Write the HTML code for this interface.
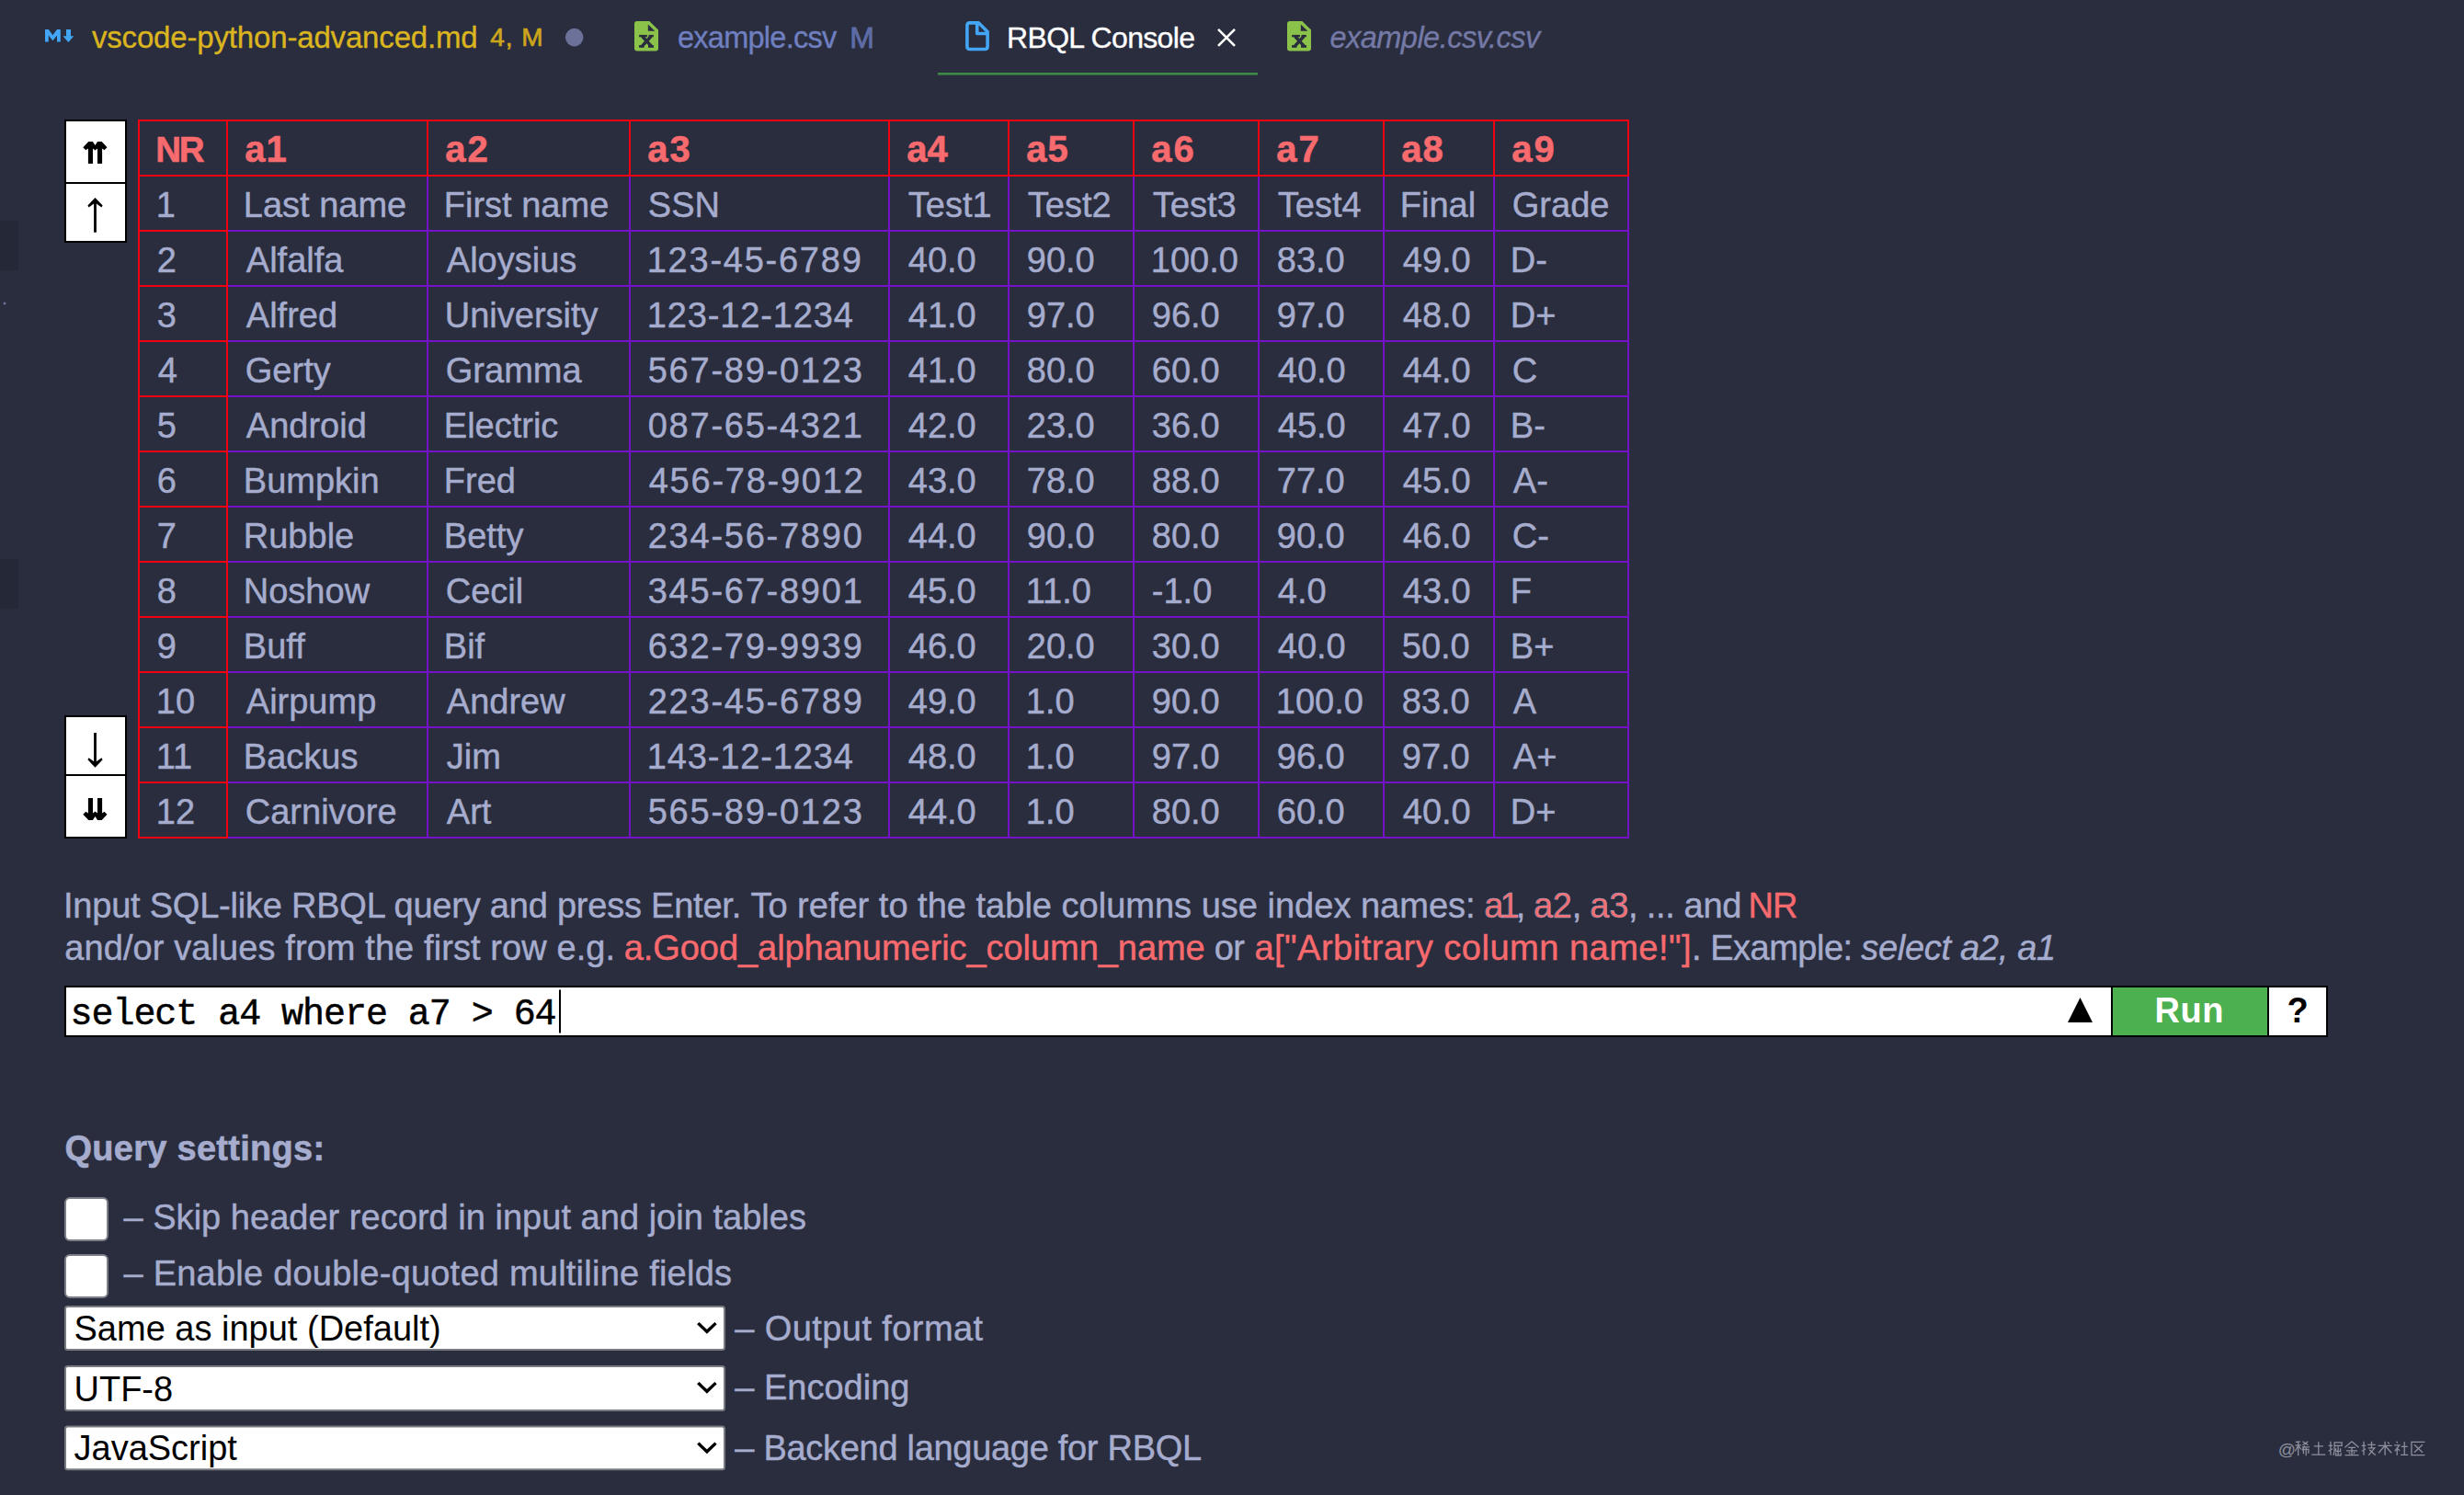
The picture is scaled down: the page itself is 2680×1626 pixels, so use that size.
<!DOCTYPE html>
<html><head><meta charset="utf-8"><style>
html,body{margin:0;padding:0;background:#292d3e;width:2680px;height:1626px;overflow:hidden}
svg{display:block}
text{white-space:pre}
</style></head><body>
<svg width="2680" height="1626" viewBox="0 0 2680 1626">
<rect width="2680" height="1626" fill="#292d3e"/>
<rect x="0" y="240" width="20" height="54" fill="#242837" />
<rect x="0" y="608" width="20" height="54" fill="#242837" />
<circle cx="5" cy="330" r="1.5" fill="#6b7099"/>
<path d="M49 45.5 V32 h3.8 l4.6 6.2 l4.6 -6.2 h3.8 V45.5 h-3.8 V38.5 l-4.6 5.8 l-4.6 -5.8 V45.5 z" fill="#42a5f5"/>
<path d="M72 32 h5 v7.3 h3.3 l-5.9 6.8 l-5.9 -6.8 h3.5 z" fill="#42a5f5"/>
<text x="99.9" y="52.2" font-family="'Liberation Sans', sans-serif" font-size="33" fill="#dbb51f" textLength="419.8" lengthAdjust="spacing" stroke="#dbb51f" stroke-width="0.35" xml:space="preserve">vscode-python-advanced.md</text>
<text x="533.2" y="50" font-family="'Liberation Sans', sans-serif" font-size="28" fill="#cda51c" textLength="57.5" lengthAdjust="spacing" stroke="#cda51c" stroke-width="0.7" xml:space="preserve">4, M</text>
<circle cx="624.7" cy="40.6" r="9.8" fill="#6c7199"/>
<g transform="translate(690,23)"><path d="M3 0 H16.3 L26 9.5 V29.4 Q26 32.4 23 32.4 H3 Q0 32.4 0 29.4 V3 Q0 0 3 0 z" fill="#8bc34a"/><path d="M14.8 3.4 V10.8 H22.4 z" fill="#292d3e"/><rect x="5.1" y="14.9" width="8.8" height="2.4" fill="#292d3e"/><rect x="15.6" y="14.9" width="5.3" height="2.4" fill="#292d3e"/><rect x="5" y="26.1" width="5.5" height="2.7" fill="#292d3e"/><rect x="15" y="26.1" width="6" height="2.7" fill="#292d3e"/><path d="M8.6 16.5 L18.6 27.4 M18.1 16.5 L8.2 27.4" stroke="#292d3e" stroke-width="3.4"/></g>
<text x="737.0" y="52" font-family="'Liberation Sans', sans-serif" font-size="32.5" fill="#6f7fc0" textLength="173.2" lengthAdjust="spacing" stroke="#6f7fc0" stroke-width="0.35" xml:space="preserve">example.csv</text>
<text x="924.3" y="52" font-family="'Liberation Sans', sans-serif" font-size="32" fill="#5e6ca6" textLength="25.6" lengthAdjust="spacing" stroke="#5e6ca6" stroke-width="0.8" xml:space="preserve">M</text>
<path d="M1064.5 24.9 H1054.9 Q1051.9 24.9 1051.9 27.9 V50.5 Q1051.9 53.5 1054.9 53.5 H1071.1 Q1074.1 53.5 1074.1 50.5 V34.5 z M1062.7 24.9 V36.5 H1074.1" fill="none" stroke="#42a5f5" stroke-width="3.6" stroke-linejoin="round"/>
<text x="1095.0" y="52.3" font-family="'Liberation Sans', sans-serif" font-size="32" fill="#ffffff" textLength="205.0" lengthAdjust="spacing" stroke="#ffffff" stroke-width="0.35" xml:space="preserve">RBQL Console</text>
<path d="M1325 31.8 L1343 49.8 M1343 31.8 L1325 49.8" stroke="#ffffff" stroke-width="2.6"/>
<rect x="1020" y="79" width="348" height="2.6" fill="#3c8a46" />
<g transform="translate(1400,23)"><path d="M3 0 H16.3 L26 9.5 V29.4 Q26 32.4 23 32.4 H3 Q0 32.4 0 29.4 V3 Q0 0 3 0 z" fill="#8bc34a"/><path d="M14.8 3.4 V10.8 H22.4 z" fill="#292d3e"/><rect x="5.1" y="14.9" width="8.8" height="2.4" fill="#292d3e"/><rect x="15.6" y="14.9" width="5.3" height="2.4" fill="#292d3e"/><rect x="5" y="26.1" width="5.5" height="2.7" fill="#292d3e"/><rect x="15" y="26.1" width="6" height="2.7" fill="#292d3e"/><path d="M8.6 16.5 L18.6 27.4 M18.1 16.5 L8.2 27.4" stroke="#292d3e" stroke-width="3.4"/></g>
<text x="1446.4" y="52" font-family="'Liberation Sans', sans-serif" font-size="32.5" fill="#7479a6" font-style="italic" textLength="228.8" lengthAdjust="spacing" stroke="#7479a6" stroke-width="0.35" xml:space="preserve">example.csv.csv</text>
<rect x="70" y="130" width="68" height="134" fill="#000000" />
<rect x="72" y="132" width="64" height="66" fill="#ffffff" />
<rect x="72" y="200" width="64" height="62" fill="#ffffff" />
<rect x="70" y="778" width="68" height="134" fill="#000000" />
<rect x="72" y="780" width="64" height="62" fill="#ffffff" />
<rect x="72" y="844" width="64" height="66" fill="#ffffff" />
<path d="M95.90 178.00 L95.90 161.50 L93.30 163.30 L90.30 160.30 L96.30 154.00 L100.90 154.00 L103.50 157.90 L106.10 154.00 L110.70 154.00 L116.50 160.30 L113.50 163.30 L111.10 161.50 L111.10 178.00 L106.00 178.00 L106.00 161.50 L103.50 163.50 L101.00 161.50 L101.00 178.00 z" fill="#000"/>
<path d="M95.90 868.00 L95.90 884.50 L93.30 882.70 L90.30 885.70 L96.30 892.00 L100.90 892.00 L103.50 888.10 L106.10 892.00 L110.70 892.00 L116.50 885.70 L113.50 882.70 L111.10 884.50 L111.10 868.00 L106.00 868.00 L106.00 884.50 L103.50 882.50 L101.00 884.50 L101.00 868.00 z" fill="#000"/>
<path d="M103.50 215.00 L111.60 223.60 L110.40 225.60 L104.90 221.60 L104.90 252.80 L102.10 252.80 L102.10 221.60 L96.60 225.60 L95.40 223.60 z" fill="#000"/>
<path d="M103.50 834.80 L111.60 826.20 L110.40 824.20 L104.90 828.20 L104.90 797.00 L102.10 797.00 L102.10 828.20 L96.60 824.20 L95.40 826.20 z" fill="#000"/>
<rect x="248" y="250" width="1524" height="2" fill="#7412c8" />
<rect x="248" y="310" width="1524" height="2" fill="#7412c8" />
<rect x="248" y="370" width="1524" height="2" fill="#7412c8" />
<rect x="248" y="430" width="1524" height="2" fill="#7412c8" />
<rect x="248" y="490" width="1524" height="2" fill="#7412c8" />
<rect x="248" y="550" width="1524" height="2" fill="#7412c8" />
<rect x="248" y="610" width="1524" height="2" fill="#7412c8" />
<rect x="248" y="670" width="1524" height="2" fill="#7412c8" />
<rect x="248" y="730" width="1524" height="2" fill="#7412c8" />
<rect x="248" y="790" width="1524" height="2" fill="#7412c8" />
<rect x="248" y="850" width="1524" height="2" fill="#7412c8" />
<rect x="248" y="910" width="1524" height="2" fill="#7412c8" />
<rect x="464" y="192" width="2" height="720" fill="#7412c8" />
<rect x="684" y="192" width="2" height="720" fill="#7412c8" />
<rect x="966" y="192" width="2" height="720" fill="#7412c8" />
<rect x="1096" y="192" width="2" height="720" fill="#7412c8" />
<rect x="1232" y="192" width="2" height="720" fill="#7412c8" />
<rect x="1368" y="192" width="2" height="720" fill="#7412c8" />
<rect x="1504" y="192" width="2" height="720" fill="#7412c8" />
<rect x="1624" y="192" width="2" height="720" fill="#7412c8" />
<rect x="1770" y="192" width="2" height="720" fill="#7412c8" />
<rect x="150" y="130" width="1622" height="2" fill="#f20010" />
<rect x="150" y="190" width="1622" height="2" fill="#f20010" />
<rect x="150" y="250" width="98" height="2" fill="#f20010" />
<rect x="150" y="310" width="98" height="2" fill="#f20010" />
<rect x="150" y="370" width="98" height="2" fill="#f20010" />
<rect x="150" y="430" width="98" height="2" fill="#f20010" />
<rect x="150" y="490" width="98" height="2" fill="#f20010" />
<rect x="150" y="550" width="98" height="2" fill="#f20010" />
<rect x="150" y="610" width="98" height="2" fill="#f20010" />
<rect x="150" y="670" width="98" height="2" fill="#f20010" />
<rect x="150" y="730" width="98" height="2" fill="#f20010" />
<rect x="150" y="790" width="98" height="2" fill="#f20010" />
<rect x="150" y="850" width="98" height="2" fill="#f20010" />
<rect x="150" y="910" width="98" height="2" fill="#f20010" />
<rect x="150" y="130" width="2" height="782" fill="#f20010" />
<rect x="246" y="130" width="2" height="782" fill="#f20010" />
<rect x="464" y="130" width="2" height="62" fill="#f20010" />
<rect x="684" y="130" width="2" height="62" fill="#f20010" />
<rect x="966" y="130" width="2" height="62" fill="#f20010" />
<rect x="1096" y="130" width="2" height="62" fill="#f20010" />
<rect x="1232" y="130" width="2" height="62" fill="#f20010" />
<rect x="1368" y="130" width="2" height="62" fill="#f20010" />
<rect x="1504" y="130" width="2" height="62" fill="#f20010" />
<rect x="1624" y="130" width="2" height="62" fill="#f20010" />
<rect x="1770" y="130" width="2" height="62" fill="#f20010" />
<text x="169.3" y="176" font-family="'Liberation Sans', sans-serif" font-size="38.5" fill="#f76a6e" font-weight="bold" textLength="53.2" lengthAdjust="spacing" stroke="#f76a6e" stroke-width="0.6" xml:space="preserve">NR</text>
<text x="266.3" y="176" font-family="'Liberation Sans', sans-serif" font-size="40" fill="#f76a6e" font-weight="bold" textLength="45.5" lengthAdjust="spacing" stroke="#f76a6e" stroke-width="0.6" xml:space="preserve">a1</text>
<text x="484.3" y="176" font-family="'Liberation Sans', sans-serif" font-size="40" fill="#f76a6e" font-weight="bold" textLength="46.5" lengthAdjust="spacing" stroke="#f76a6e" stroke-width="0.6" xml:space="preserve">a2</text>
<text x="704.3" y="176" font-family="'Liberation Sans', sans-serif" font-size="40" fill="#f76a6e" font-weight="bold" textLength="46.5" lengthAdjust="spacing" stroke="#f76a6e" stroke-width="0.6" xml:space="preserve">a3</text>
<text x="986.3" y="176" font-family="'Liberation Sans', sans-serif" font-size="40" fill="#f76a6e" font-weight="bold" textLength="44.5" lengthAdjust="spacing" stroke="#f76a6e" stroke-width="0.6" xml:space="preserve">a4</text>
<text x="1116.3" y="176" font-family="'Liberation Sans', sans-serif" font-size="40" fill="#f76a6e" font-weight="bold" textLength="45.5" lengthAdjust="spacing" stroke="#f76a6e" stroke-width="0.6" xml:space="preserve">a5</text>
<text x="1252.3" y="176" font-family="'Liberation Sans', sans-serif" font-size="40" fill="#f76a6e" font-weight="bold" textLength="46.5" lengthAdjust="spacing" stroke="#f76a6e" stroke-width="0.6" xml:space="preserve">a6</text>
<text x="1388.3" y="176" font-family="'Liberation Sans', sans-serif" font-size="40" fill="#f76a6e" font-weight="bold" textLength="46.5" lengthAdjust="spacing" stroke="#f76a6e" stroke-width="0.6" xml:space="preserve">a7</text>
<text x="1524.3" y="176" font-family="'Liberation Sans', sans-serif" font-size="40" fill="#f76a6e" font-weight="bold" textLength="45.5" lengthAdjust="spacing" stroke="#f76a6e" stroke-width="0.6" xml:space="preserve">a8</text>
<text x="1644.3" y="176" font-family="'Liberation Sans', sans-serif" font-size="40" fill="#f76a6e" font-weight="bold" textLength="46.5" lengthAdjust="spacing" stroke="#f76a6e" stroke-width="0.6" xml:space="preserve">a9</text>
<text x="169.8" y="236" font-family="'Liberation Sans', sans-serif" font-size="38" fill="#a6accd" stroke="#a6accd" stroke-width="0.45" xml:space="preserve">1</text>
<text x="264.8" y="236" font-family="'Liberation Sans', sans-serif" font-size="38" fill="#a6accd" stroke="#a6accd" stroke-width="0.45" xml:space="preserve">Last name</text>
<text x="482.8" y="236" font-family="'Liberation Sans', sans-serif" font-size="38" fill="#a6accd" stroke="#a6accd" stroke-width="0.45" xml:space="preserve">First name</text>
<text x="704.8" y="236" font-family="'Liberation Sans', sans-serif" font-size="38" fill="#a6accd" stroke="#a6accd" stroke-width="0.45" xml:space="preserve">SSN</text>
<text x="987.8" y="236" font-family="'Liberation Sans', sans-serif" font-size="38" fill="#a6accd" stroke="#a6accd" stroke-width="0.45" xml:space="preserve">Test1</text>
<text x="1117.8" y="236" font-family="'Liberation Sans', sans-serif" font-size="38" fill="#a6accd" stroke="#a6accd" stroke-width="0.45" xml:space="preserve">Test2</text>
<text x="1253.8" y="236" font-family="'Liberation Sans', sans-serif" font-size="38" fill="#a6accd" stroke="#a6accd" stroke-width="0.45" xml:space="preserve">Test3</text>
<text x="1389.8" y="236" font-family="'Liberation Sans', sans-serif" font-size="38" fill="#a6accd" stroke="#a6accd" stroke-width="0.45" xml:space="preserve">Test4</text>
<text x="1522.8" y="236" font-family="'Liberation Sans', sans-serif" font-size="38" fill="#a6accd" stroke="#a6accd" stroke-width="0.45" xml:space="preserve">Final</text>
<text x="1644.8" y="236" font-family="'Liberation Sans', sans-serif" font-size="38" fill="#a6accd" stroke="#a6accd" stroke-width="0.45" xml:space="preserve">Grade</text>
<text x="170.8" y="296" font-family="'Liberation Sans', sans-serif" font-size="38" fill="#a6accd" stroke="#a6accd" stroke-width="0.45" xml:space="preserve">2</text>
<text x="267.8" y="296" font-family="'Liberation Sans', sans-serif" font-size="38" fill="#a6accd" stroke="#a6accd" stroke-width="0.45" xml:space="preserve">Alfalfa</text>
<text x="485.8" y="296" font-family="'Liberation Sans', sans-serif" font-size="38" fill="#a6accd" stroke="#a6accd" stroke-width="0.45" xml:space="preserve">Aloysius</text>
<text x="703.7" y="296" font-family="'Liberation Sans', sans-serif" font-size="38" fill="#a6accd" textLength="233.1" lengthAdjust="spacing" stroke="#a6accd" stroke-width="0.45" xml:space="preserve">123-45-6789</text>
<text x="987.8" y="296" font-family="'Liberation Sans', sans-serif" font-size="38" fill="#a6accd" stroke="#a6accd" stroke-width="0.45" xml:space="preserve">40.0</text>
<text x="1116.8" y="296" font-family="'Liberation Sans', sans-serif" font-size="38" fill="#a6accd" stroke="#a6accd" stroke-width="0.45" xml:space="preserve">90.0</text>
<text x="1251.8" y="296" font-family="'Liberation Sans', sans-serif" font-size="38" fill="#a6accd" stroke="#a6accd" stroke-width="0.45" xml:space="preserve">100.0</text>
<text x="1388.8" y="296" font-family="'Liberation Sans', sans-serif" font-size="38" fill="#a6accd" stroke="#a6accd" stroke-width="0.45" xml:space="preserve">83.0</text>
<text x="1525.8" y="296" font-family="'Liberation Sans', sans-serif" font-size="38" fill="#a6accd" stroke="#a6accd" stroke-width="0.45" xml:space="preserve">49.0</text>
<text x="1642.8" y="296" font-family="'Liberation Sans', sans-serif" font-size="38" fill="#a6accd" stroke="#a6accd" stroke-width="0.45" xml:space="preserve">D-</text>
<text x="170.8" y="356" font-family="'Liberation Sans', sans-serif" font-size="38" fill="#a6accd" stroke="#a6accd" stroke-width="0.45" xml:space="preserve">3</text>
<text x="267.8" y="356" font-family="'Liberation Sans', sans-serif" font-size="38" fill="#a6accd" stroke="#a6accd" stroke-width="0.45" xml:space="preserve">Alfred</text>
<text x="483.8" y="356" font-family="'Liberation Sans', sans-serif" font-size="38" fill="#a6accd" stroke="#a6accd" stroke-width="0.45" xml:space="preserve">University</text>
<text x="703.7" y="356" font-family="'Liberation Sans', sans-serif" font-size="38" fill="#a6accd" textLength="224.3" lengthAdjust="spacing" stroke="#a6accd" stroke-width="0.45" xml:space="preserve">123-12-1234</text>
<text x="987.8" y="356" font-family="'Liberation Sans', sans-serif" font-size="38" fill="#a6accd" stroke="#a6accd" stroke-width="0.45" xml:space="preserve">41.0</text>
<text x="1116.8" y="356" font-family="'Liberation Sans', sans-serif" font-size="38" fill="#a6accd" stroke="#a6accd" stroke-width="0.45" xml:space="preserve">97.0</text>
<text x="1252.8" y="356" font-family="'Liberation Sans', sans-serif" font-size="38" fill="#a6accd" stroke="#a6accd" stroke-width="0.45" xml:space="preserve">96.0</text>
<text x="1388.8" y="356" font-family="'Liberation Sans', sans-serif" font-size="38" fill="#a6accd" stroke="#a6accd" stroke-width="0.45" xml:space="preserve">97.0</text>
<text x="1525.8" y="356" font-family="'Liberation Sans', sans-serif" font-size="38" fill="#a6accd" stroke="#a6accd" stroke-width="0.45" xml:space="preserve">48.0</text>
<text x="1642.8" y="356" font-family="'Liberation Sans', sans-serif" font-size="38" fill="#a6accd" stroke="#a6accd" stroke-width="0.45" xml:space="preserve">D+</text>
<text x="171.8" y="416" font-family="'Liberation Sans', sans-serif" font-size="38" fill="#a6accd" stroke="#a6accd" stroke-width="0.45" xml:space="preserve">4</text>
<text x="266.8" y="416" font-family="'Liberation Sans', sans-serif" font-size="38" fill="#a6accd" stroke="#a6accd" stroke-width="0.45" xml:space="preserve">Gerty</text>
<text x="484.8" y="416" font-family="'Liberation Sans', sans-serif" font-size="38" fill="#a6accd" stroke="#a6accd" stroke-width="0.45" xml:space="preserve">Gramma</text>
<text x="704.7" y="416" font-family="'Liberation Sans', sans-serif" font-size="38" fill="#a6accd" textLength="233.1" lengthAdjust="spacing" stroke="#a6accd" stroke-width="0.45" xml:space="preserve">567-89-0123</text>
<text x="987.8" y="416" font-family="'Liberation Sans', sans-serif" font-size="38" fill="#a6accd" stroke="#a6accd" stroke-width="0.45" xml:space="preserve">41.0</text>
<text x="1116.8" y="416" font-family="'Liberation Sans', sans-serif" font-size="38" fill="#a6accd" stroke="#a6accd" stroke-width="0.45" xml:space="preserve">80.0</text>
<text x="1252.8" y="416" font-family="'Liberation Sans', sans-serif" font-size="38" fill="#a6accd" stroke="#a6accd" stroke-width="0.45" xml:space="preserve">60.0</text>
<text x="1389.8" y="416" font-family="'Liberation Sans', sans-serif" font-size="38" fill="#a6accd" stroke="#a6accd" stroke-width="0.45" xml:space="preserve">40.0</text>
<text x="1525.8" y="416" font-family="'Liberation Sans', sans-serif" font-size="38" fill="#a6accd" stroke="#a6accd" stroke-width="0.45" xml:space="preserve">44.0</text>
<text x="1644.8" y="416" font-family="'Liberation Sans', sans-serif" font-size="38" fill="#a6accd" stroke="#a6accd" stroke-width="0.45" xml:space="preserve">C</text>
<text x="170.8" y="476" font-family="'Liberation Sans', sans-serif" font-size="38" fill="#a6accd" stroke="#a6accd" stroke-width="0.45" xml:space="preserve">5</text>
<text x="267.8" y="476" font-family="'Liberation Sans', sans-serif" font-size="38" fill="#a6accd" stroke="#a6accd" stroke-width="0.45" xml:space="preserve">Android</text>
<text x="482.8" y="476" font-family="'Liberation Sans', sans-serif" font-size="38" fill="#a6accd" stroke="#a6accd" stroke-width="0.45" xml:space="preserve">Electric</text>
<text x="704.7" y="476" font-family="'Liberation Sans', sans-serif" font-size="38" fill="#a6accd" textLength="233.1" lengthAdjust="spacing" stroke="#a6accd" stroke-width="0.45" xml:space="preserve">087-65-4321</text>
<text x="987.8" y="476" font-family="'Liberation Sans', sans-serif" font-size="38" fill="#a6accd" stroke="#a6accd" stroke-width="0.45" xml:space="preserve">42.0</text>
<text x="1116.8" y="476" font-family="'Liberation Sans', sans-serif" font-size="38" fill="#a6accd" stroke="#a6accd" stroke-width="0.45" xml:space="preserve">23.0</text>
<text x="1252.8" y="476" font-family="'Liberation Sans', sans-serif" font-size="38" fill="#a6accd" stroke="#a6accd" stroke-width="0.45" xml:space="preserve">36.0</text>
<text x="1389.8" y="476" font-family="'Liberation Sans', sans-serif" font-size="38" fill="#a6accd" stroke="#a6accd" stroke-width="0.45" xml:space="preserve">45.0</text>
<text x="1525.8" y="476" font-family="'Liberation Sans', sans-serif" font-size="38" fill="#a6accd" stroke="#a6accd" stroke-width="0.45" xml:space="preserve">47.0</text>
<text x="1642.8" y="476" font-family="'Liberation Sans', sans-serif" font-size="38" fill="#a6accd" stroke="#a6accd" stroke-width="0.45" xml:space="preserve">B-</text>
<text x="170.8" y="536" font-family="'Liberation Sans', sans-serif" font-size="38" fill="#a6accd" stroke="#a6accd" stroke-width="0.45" xml:space="preserve">6</text>
<text x="264.8" y="536" font-family="'Liberation Sans', sans-serif" font-size="38" fill="#a6accd" stroke="#a6accd" stroke-width="0.45" xml:space="preserve">Bumpkin</text>
<text x="482.8" y="536" font-family="'Liberation Sans', sans-serif" font-size="38" fill="#a6accd" stroke="#a6accd" stroke-width="0.45" xml:space="preserve">Fred</text>
<text x="705.7" y="536" font-family="'Liberation Sans', sans-serif" font-size="38" fill="#a6accd" textLength="233.1" lengthAdjust="spacing" stroke="#a6accd" stroke-width="0.45" xml:space="preserve">456-78-9012</text>
<text x="987.8" y="536" font-family="'Liberation Sans', sans-serif" font-size="38" fill="#a6accd" stroke="#a6accd" stroke-width="0.45" xml:space="preserve">43.0</text>
<text x="1116.8" y="536" font-family="'Liberation Sans', sans-serif" font-size="38" fill="#a6accd" stroke="#a6accd" stroke-width="0.45" xml:space="preserve">78.0</text>
<text x="1252.8" y="536" font-family="'Liberation Sans', sans-serif" font-size="38" fill="#a6accd" stroke="#a6accd" stroke-width="0.45" xml:space="preserve">88.0</text>
<text x="1388.8" y="536" font-family="'Liberation Sans', sans-serif" font-size="38" fill="#a6accd" stroke="#a6accd" stroke-width="0.45" xml:space="preserve">77.0</text>
<text x="1525.8" y="536" font-family="'Liberation Sans', sans-serif" font-size="38" fill="#a6accd" stroke="#a6accd" stroke-width="0.45" xml:space="preserve">45.0</text>
<text x="1645.8" y="536" font-family="'Liberation Sans', sans-serif" font-size="38" fill="#a6accd" stroke="#a6accd" stroke-width="0.45" xml:space="preserve">A-</text>
<text x="170.8" y="596" font-family="'Liberation Sans', sans-serif" font-size="38" fill="#a6accd" stroke="#a6accd" stroke-width="0.45" xml:space="preserve">7</text>
<text x="264.8" y="596" font-family="'Liberation Sans', sans-serif" font-size="38" fill="#a6accd" stroke="#a6accd" stroke-width="0.45" xml:space="preserve">Rubble</text>
<text x="482.8" y="596" font-family="'Liberation Sans', sans-serif" font-size="38" fill="#a6accd" stroke="#a6accd" stroke-width="0.45" xml:space="preserve">Betty</text>
<text x="704.7" y="596" font-family="'Liberation Sans', sans-serif" font-size="38" fill="#a6accd" textLength="233.1" lengthAdjust="spacing" stroke="#a6accd" stroke-width="0.45" xml:space="preserve">234-56-7890</text>
<text x="987.8" y="596" font-family="'Liberation Sans', sans-serif" font-size="38" fill="#a6accd" stroke="#a6accd" stroke-width="0.45" xml:space="preserve">44.0</text>
<text x="1116.8" y="596" font-family="'Liberation Sans', sans-serif" font-size="38" fill="#a6accd" stroke="#a6accd" stroke-width="0.45" xml:space="preserve">90.0</text>
<text x="1252.8" y="596" font-family="'Liberation Sans', sans-serif" font-size="38" fill="#a6accd" stroke="#a6accd" stroke-width="0.45" xml:space="preserve">80.0</text>
<text x="1388.8" y="596" font-family="'Liberation Sans', sans-serif" font-size="38" fill="#a6accd" stroke="#a6accd" stroke-width="0.45" xml:space="preserve">90.0</text>
<text x="1525.8" y="596" font-family="'Liberation Sans', sans-serif" font-size="38" fill="#a6accd" stroke="#a6accd" stroke-width="0.45" xml:space="preserve">46.0</text>
<text x="1644.8" y="596" font-family="'Liberation Sans', sans-serif" font-size="38" fill="#a6accd" stroke="#a6accd" stroke-width="0.45" xml:space="preserve">C-</text>
<text x="170.8" y="656" font-family="'Liberation Sans', sans-serif" font-size="38" fill="#a6accd" stroke="#a6accd" stroke-width="0.45" xml:space="preserve">8</text>
<text x="264.8" y="656" font-family="'Liberation Sans', sans-serif" font-size="38" fill="#a6accd" stroke="#a6accd" stroke-width="0.45" xml:space="preserve">Noshow</text>
<text x="484.8" y="656" font-family="'Liberation Sans', sans-serif" font-size="38" fill="#a6accd" stroke="#a6accd" stroke-width="0.45" xml:space="preserve">Cecil</text>
<text x="704.7" y="656" font-family="'Liberation Sans', sans-serif" font-size="38" fill="#a6accd" textLength="233.1" lengthAdjust="spacing" stroke="#a6accd" stroke-width="0.45" xml:space="preserve">345-67-8901</text>
<text x="987.8" y="656" font-family="'Liberation Sans', sans-serif" font-size="38" fill="#a6accd" stroke="#a6accd" stroke-width="0.45" xml:space="preserve">45.0</text>
<text x="1115.8" y="656" font-family="'Liberation Sans', sans-serif" font-size="38" fill="#a6accd" stroke="#a6accd" stroke-width="0.45" xml:space="preserve">11.0</text>
<text x="1252.8" y="656" font-family="'Liberation Sans', sans-serif" font-size="38" fill="#a6accd" stroke="#a6accd" stroke-width="0.45" xml:space="preserve">-1.0</text>
<text x="1389.8" y="656" font-family="'Liberation Sans', sans-serif" font-size="38" fill="#a6accd" stroke="#a6accd" stroke-width="0.45" xml:space="preserve">4.0</text>
<text x="1525.8" y="656" font-family="'Liberation Sans', sans-serif" font-size="38" fill="#a6accd" stroke="#a6accd" stroke-width="0.45" xml:space="preserve">43.0</text>
<text x="1642.8" y="656" font-family="'Liberation Sans', sans-serif" font-size="38" fill="#a6accd" stroke="#a6accd" stroke-width="0.45" xml:space="preserve">F</text>
<text x="170.8" y="716" font-family="'Liberation Sans', sans-serif" font-size="38" fill="#a6accd" stroke="#a6accd" stroke-width="0.45" xml:space="preserve">9</text>
<text x="264.8" y="716" font-family="'Liberation Sans', sans-serif" font-size="38" fill="#a6accd" stroke="#a6accd" stroke-width="0.45" xml:space="preserve">Buff</text>
<text x="482.8" y="716" font-family="'Liberation Sans', sans-serif" font-size="38" fill="#a6accd" stroke="#a6accd" stroke-width="0.45" xml:space="preserve">Bif</text>
<text x="704.7" y="716" font-family="'Liberation Sans', sans-serif" font-size="38" fill="#a6accd" textLength="233.1" lengthAdjust="spacing" stroke="#a6accd" stroke-width="0.45" xml:space="preserve">632-79-9939</text>
<text x="987.8" y="716" font-family="'Liberation Sans', sans-serif" font-size="38" fill="#a6accd" stroke="#a6accd" stroke-width="0.45" xml:space="preserve">46.0</text>
<text x="1116.8" y="716" font-family="'Liberation Sans', sans-serif" font-size="38" fill="#a6accd" stroke="#a6accd" stroke-width="0.45" xml:space="preserve">20.0</text>
<text x="1252.8" y="716" font-family="'Liberation Sans', sans-serif" font-size="38" fill="#a6accd" stroke="#a6accd" stroke-width="0.45" xml:space="preserve">30.0</text>
<text x="1389.8" y="716" font-family="'Liberation Sans', sans-serif" font-size="38" fill="#a6accd" stroke="#a6accd" stroke-width="0.45" xml:space="preserve">40.0</text>
<text x="1524.8" y="716" font-family="'Liberation Sans', sans-serif" font-size="38" fill="#a6accd" stroke="#a6accd" stroke-width="0.45" xml:space="preserve">50.0</text>
<text x="1642.8" y="716" font-family="'Liberation Sans', sans-serif" font-size="38" fill="#a6accd" stroke="#a6accd" stroke-width="0.45" xml:space="preserve">B+</text>
<text x="169.8" y="776" font-family="'Liberation Sans', sans-serif" font-size="38" fill="#a6accd" stroke="#a6accd" stroke-width="0.45" xml:space="preserve">10</text>
<text x="267.8" y="776" font-family="'Liberation Sans', sans-serif" font-size="38" fill="#a6accd" stroke="#a6accd" stroke-width="0.45" xml:space="preserve">Airpump</text>
<text x="485.8" y="776" font-family="'Liberation Sans', sans-serif" font-size="38" fill="#a6accd" stroke="#a6accd" stroke-width="0.45" xml:space="preserve">Andrew</text>
<text x="704.7" y="776" font-family="'Liberation Sans', sans-serif" font-size="38" fill="#a6accd" textLength="233.1" lengthAdjust="spacing" stroke="#a6accd" stroke-width="0.45" xml:space="preserve">223-45-6789</text>
<text x="987.8" y="776" font-family="'Liberation Sans', sans-serif" font-size="38" fill="#a6accd" stroke="#a6accd" stroke-width="0.45" xml:space="preserve">49.0</text>
<text x="1115.8" y="776" font-family="'Liberation Sans', sans-serif" font-size="38" fill="#a6accd" stroke="#a6accd" stroke-width="0.45" xml:space="preserve">1.0</text>
<text x="1252.8" y="776" font-family="'Liberation Sans', sans-serif" font-size="38" fill="#a6accd" stroke="#a6accd" stroke-width="0.45" xml:space="preserve">90.0</text>
<text x="1387.8" y="776" font-family="'Liberation Sans', sans-serif" font-size="38" fill="#a6accd" stroke="#a6accd" stroke-width="0.45" xml:space="preserve">100.0</text>
<text x="1524.8" y="776" font-family="'Liberation Sans', sans-serif" font-size="38" fill="#a6accd" stroke="#a6accd" stroke-width="0.45" xml:space="preserve">83.0</text>
<text x="1645.8" y="776" font-family="'Liberation Sans', sans-serif" font-size="38" fill="#a6accd" stroke="#a6accd" stroke-width="0.45" xml:space="preserve">A</text>
<text x="169.8" y="836" font-family="'Liberation Sans', sans-serif" font-size="38" fill="#a6accd" stroke="#a6accd" stroke-width="0.45" xml:space="preserve">11</text>
<text x="264.8" y="836" font-family="'Liberation Sans', sans-serif" font-size="38" fill="#a6accd" stroke="#a6accd" stroke-width="0.45" xml:space="preserve">Backus</text>
<text x="485.8" y="836" font-family="'Liberation Sans', sans-serif" font-size="38" fill="#a6accd" stroke="#a6accd" stroke-width="0.45" xml:space="preserve">Jim</text>
<text x="703.7" y="836" font-family="'Liberation Sans', sans-serif" font-size="38" fill="#a6accd" textLength="224.3" lengthAdjust="spacing" stroke="#a6accd" stroke-width="0.45" xml:space="preserve">143-12-1234</text>
<text x="987.8" y="836" font-family="'Liberation Sans', sans-serif" font-size="38" fill="#a6accd" stroke="#a6accd" stroke-width="0.45" xml:space="preserve">48.0</text>
<text x="1115.8" y="836" font-family="'Liberation Sans', sans-serif" font-size="38" fill="#a6accd" stroke="#a6accd" stroke-width="0.45" xml:space="preserve">1.0</text>
<text x="1252.8" y="836" font-family="'Liberation Sans', sans-serif" font-size="38" fill="#a6accd" stroke="#a6accd" stroke-width="0.45" xml:space="preserve">97.0</text>
<text x="1388.8" y="836" font-family="'Liberation Sans', sans-serif" font-size="38" fill="#a6accd" stroke="#a6accd" stroke-width="0.45" xml:space="preserve">96.0</text>
<text x="1524.8" y="836" font-family="'Liberation Sans', sans-serif" font-size="38" fill="#a6accd" stroke="#a6accd" stroke-width="0.45" xml:space="preserve">97.0</text>
<text x="1645.8" y="836" font-family="'Liberation Sans', sans-serif" font-size="38" fill="#a6accd" stroke="#a6accd" stroke-width="0.45" xml:space="preserve">A+</text>
<text x="169.8" y="896" font-family="'Liberation Sans', sans-serif" font-size="38" fill="#a6accd" stroke="#a6accd" stroke-width="0.45" xml:space="preserve">12</text>
<text x="266.8" y="896" font-family="'Liberation Sans', sans-serif" font-size="38" fill="#a6accd" stroke="#a6accd" stroke-width="0.45" xml:space="preserve">Carnivore</text>
<text x="485.8" y="896" font-family="'Liberation Sans', sans-serif" font-size="38" fill="#a6accd" stroke="#a6accd" stroke-width="0.45" xml:space="preserve">Art</text>
<text x="704.7" y="896" font-family="'Liberation Sans', sans-serif" font-size="38" fill="#a6accd" textLength="233.1" lengthAdjust="spacing" stroke="#a6accd" stroke-width="0.45" xml:space="preserve">565-89-0123</text>
<text x="987.8" y="896" font-family="'Liberation Sans', sans-serif" font-size="38" fill="#a6accd" stroke="#a6accd" stroke-width="0.45" xml:space="preserve">44.0</text>
<text x="1115.8" y="896" font-family="'Liberation Sans', sans-serif" font-size="38" fill="#a6accd" stroke="#a6accd" stroke-width="0.45" xml:space="preserve">1.0</text>
<text x="1252.8" y="896" font-family="'Liberation Sans', sans-serif" font-size="38" fill="#a6accd" stroke="#a6accd" stroke-width="0.45" xml:space="preserve">80.0</text>
<text x="1388.8" y="896" font-family="'Liberation Sans', sans-serif" font-size="38" fill="#a6accd" stroke="#a6accd" stroke-width="0.45" xml:space="preserve">60.0</text>
<text x="1525.8" y="896" font-family="'Liberation Sans', sans-serif" font-size="38" fill="#a6accd" stroke="#a6accd" stroke-width="0.45" xml:space="preserve">40.0</text>
<text x="1642.8" y="896" font-family="'Liberation Sans', sans-serif" font-size="38" fill="#a6accd" stroke="#a6accd" stroke-width="0.45" xml:space="preserve">D+</text>
<text x="69.0" y="997.6" font-family="'Liberation Sans', sans-serif" font-size="38" fill="#a6accd" textLength="737.2" lengthAdjust="spacing" stroke="#a6accd" stroke-width="0.45" xml:space="preserve">Input SQL-like RBQL query and press Enter.</text>
<text x="816.4" y="997.6" font-family="'Liberation Sans', sans-serif" font-size="38" fill="#a6accd" textLength="788.2" lengthAdjust="spacing" stroke="#a6accd" stroke-width="0.45" xml:space="preserve">To refer to the table columns use index names:</text>
<text x="1614.2" y="997.6" font-family="'Liberation Sans', sans-serif" font-size="38" fill="#a6accd" textLength="45.2" lengthAdjust="spacing" stroke="#a6accd" stroke-width="0.45" xml:space="preserve"><tspan fill="#f76a6e" >a1</tspan><tspan >,</tspan></text>
<text x="1668.0" y="997.6" font-family="'Liberation Sans', sans-serif" font-size="38" fill="#a6accd" textLength="52.3" lengthAdjust="spacing" stroke="#a6accd" stroke-width="0.45" xml:space="preserve"><tspan fill="#f76a6e" >a2</tspan><tspan >,</tspan></text>
<text x="1729.3" y="997.6" font-family="'Liberation Sans', sans-serif" font-size="38" fill="#a6accd" textLength="52.3" lengthAdjust="spacing" stroke="#a6accd" stroke-width="0.45" xml:space="preserve"><tspan fill="#f76a6e" >a3</tspan><tspan >,</tspan></text>
<text x="1790.8" y="997.6" font-family="'Liberation Sans', sans-serif" font-size="38" fill="#a6accd" textLength="103.5" lengthAdjust="spacing" stroke="#a6accd" stroke-width="0.45" xml:space="preserve">... and</text>
<text x="1901.4" y="997.6" font-family="'Liberation Sans', sans-serif" font-size="38" fill="#f76a6e" textLength="54.1" lengthAdjust="spacing" stroke="#f76a6e" stroke-width="0.45" xml:space="preserve">NR</text>
<text x="70.3" y="1043.75" font-family="'Liberation Sans', sans-serif" font-size="38" fill="#a6accd" textLength="598.8" lengthAdjust="spacing" stroke="#a6accd" stroke-width="0.45" xml:space="preserve">and/or values from the first row e.g.</text>
<text x="678.7" y="1043.75" font-family="'Liberation Sans', sans-serif" font-size="38" fill="#f76a6e" textLength="632.0" lengthAdjust="spacing" stroke="#f76a6e" stroke-width="0.45" xml:space="preserve">a.Good_alphanumeric_column_name</text>
<text x="1320.8" y="1043.75" font-family="'Liberation Sans', sans-serif" font-size="38" fill="#a6accd" textLength="33.1" lengthAdjust="spacing" stroke="#a6accd" stroke-width="0.45" xml:space="preserve">or</text>
<text x="1364.4" y="1043.75" font-family="'Liberation Sans', sans-serif" font-size="38" fill="#f76a6e" textLength="475.2" lengthAdjust="spacing" stroke="#f76a6e" stroke-width="0.45" xml:space="preserve">a[&quot;Arbitrary column name!&quot;]</text>
<text x="1840.0" y="1043.75" font-family="'Liberation Sans', sans-serif" font-size="38" fill="#a6accd" textLength="175.1" lengthAdjust="spacing" stroke="#a6accd" stroke-width="0.45" xml:space="preserve">. Example:</text>
<text x="2024.2" y="1043.75" font-family="'Liberation Sans', sans-serif" font-size="38" fill="#a6accd" font-style="italic" textLength="212.0" lengthAdjust="spacing" stroke="#a6accd" stroke-width="0.45" xml:space="preserve">select a2, a1</text>
<rect x="70" y="1072" width="2462" height="56" fill="#000000" />
<rect x="72" y="1074" width="2224" height="52" fill="#ffffff" />
<rect x="2298" y="1074" width="168" height="52" fill="#4caf50" />
<rect x="2468" y="1074" width="62" height="52" fill="#ffffff" />
<text x="76.5" y="1114" font-family="'Liberation Mono', monospace" font-size="40" fill="#000000" textLength="529.1" lengthAdjust="spacing" stroke="#000" stroke-width="0.5" xml:space="preserve">select a4 where a7 &gt; 64</text>
<rect x="608" y="1076.5" width="2" height="47" fill="#000000" />
<path d="M2262.5 1085.1 L2276 1111.9 H2249 z" fill="#000"/>
<text x="2343.4" y="1111.9" font-family="'Liberation Sans', sans-serif" font-size="38" fill="#ffffff" font-weight="bold" textLength="75.0" lengthAdjust="spacing" xml:space="preserve">Run</text>
<text x="2487.6" y="1112" font-family="'Liberation Sans', sans-serif" font-size="38" fill="#000000" font-weight="bold" textLength="22.6" lengthAdjust="spacing" xml:space="preserve">?</text>
<text x="70.4" y="1262" font-family="'Liberation Sans', sans-serif" font-size="38" fill="#a6accd" font-weight="bold" textLength="282.7" lengthAdjust="spacing" stroke="#a6accd" stroke-width="0.6" xml:space="preserve">Query settings:</text>
<rect x="71" y="1303" width="46" height="46" rx="5" ry="5" fill="#ffffff" stroke="#7c7f88" stroke-width="2"/>
<rect x="71" y="1365" width="46" height="46" rx="5" ry="5" fill="#ffffff" stroke="#7c7f88" stroke-width="2"/>
<text x="134.5" y="1337" font-family="'Liberation Sans', sans-serif" font-size="38" fill="#a6accd" textLength="742.5" lengthAdjust="spacing" stroke="#a6accd" stroke-width="0.45" xml:space="preserve">– Skip header record in input and join tables</text>
<text x="134.5" y="1397.6" font-family="'Liberation Sans', sans-serif" font-size="38" fill="#a6accd" textLength="661.5" lengthAdjust="spacing" stroke="#a6accd" stroke-width="0.45" xml:space="preserve">– Enable double-quoted multiline fields</text>
<rect x="71" y="1421" width="717" height="47" rx="2.5" ry="2.5" fill="#ffffff" stroke="#787b7f" stroke-width="2"/>
<text x="80.5" y="1457.5" font-family="'Liberation Sans', sans-serif" font-size="38" fill="#000000" xml:space="preserve">Same as input (Default)</text>
<path d="M760.5 1440.3 L768.9 1448.3 L777.3 1440.3" fill="none" stroke="#000" stroke-width="3.4" stroke-linecap="square" stroke-linejoin="miter"/>
<text x="799.3" y="1458.2" font-family="'Liberation Sans', sans-serif" font-size="38" fill="#a6accd" textLength="269.8" lengthAdjust="spacing" stroke="#a6accd" stroke-width="0.45" xml:space="preserve">– Output format</text>
<rect x="71" y="1486" width="717" height="48" rx="2.5" ry="2.5" fill="#ffffff" stroke="#787b7f" stroke-width="2"/>
<text x="80.5" y="1523.7" font-family="'Liberation Sans', sans-serif" font-size="38" fill="#000000" xml:space="preserve">UTF-8</text>
<path d="M760.5 1505.3 L768.9 1513.3 L777.3 1505.3" fill="none" stroke="#000" stroke-width="3.4" stroke-linecap="square" stroke-linejoin="miter"/>
<text x="799.3" y="1522.1" font-family="'Liberation Sans', sans-serif" font-size="38" fill="#a6accd" stroke="#a6accd" stroke-width="0.45" xml:space="preserve">– Encoding</text>
<rect x="71" y="1551.5" width="717" height="46.799999999999955" rx="2.5" ry="2.5" fill="#ffffff" stroke="#787b7f" stroke-width="2"/>
<text x="80.5" y="1588" font-family="'Liberation Sans', sans-serif" font-size="38" fill="#000000" xml:space="preserve">JavaScript</text>
<path d="M760.5 1570.8 L768.9 1578.8 L777.3 1570.8" fill="none" stroke="#000" stroke-width="3.4" stroke-linecap="square" stroke-linejoin="miter"/>
<text x="799.3" y="1588" font-family="'Liberation Sans', sans-serif" font-size="38" fill="#a6accd" textLength="507.8" lengthAdjust="spacing" stroke="#a6accd" stroke-width="0.45" xml:space="preserve">– Backend language for RBQL</text>
<text x="2477.8" y="1582.5" font-family="'Liberation Sans', sans-serif" font-size="19" fill="#8d8f9c" textLength="15.4" lengthAdjust="spacing" xml:space="preserve">@</text>
<path transform="translate(2495.9,1567.3)" d="M1 1 L6 0.5 M0.5 4.5 H7 M3.8 1 V16 M3.8 5 L0.5 11 M3.8 5 L7 9 M8.5 0.5 L14.5 4.5 M14.5 0.5 L8.5 4.5 M8 6.5 H16 M11 5 L8 10 M9.5 14 V9 H15 V13.5 M12.3 7.5 V16" fill="none" stroke="#8d8f9c" stroke-width="1.3"/>
<path transform="translate(2513.8,1567.3)" d="M3 5.5 H13 M8 1 V14.5 M0.5 14.8 H15.5" fill="none" stroke="#8d8f9c" stroke-width="1.3"/>
<path transform="translate(2532.1,1567.3)" d="M0.5 5 H5 M2.8 0.5 V15.5 M0.5 11 L5 8.5 M7 5 H15 V1.5 H7 V10 L6 15.5 M11 6 V15.5 M8.5 8 V11 H13.5 V8 M8.5 12.5 V15.5 H14 V12.5" fill="none" stroke="#8d8f9c" stroke-width="1.3"/>
<path transform="translate(2550,1567.3)" d="M8 0.5 L0.5 7 M8 0.5 L15.5 7 M4 7 H12 M2 10.5 H14 M8 7 V15 M5 12 L6 14 M11 12 L10 14 M0.5 15.3 H15.5" fill="none" stroke="#8d8f9c" stroke-width="1.3"/>
<path transform="translate(2568.2,1567.3)" d="M0.5 5 H5 M2.8 0.5 V15.5 M0.5 11 L5 8.5 M7 4 H15.5 M11.3 0.5 V7.5 M7.5 7.5 H14.5 L8 15.5 M9 9.5 L15.5 15.5" fill="none" stroke="#8d8f9c" stroke-width="1.3"/>
<path transform="translate(2586.1,1567.3)" d="M0.5 5 H15.5 M8 0.5 V15.5 M7.5 5.5 L1 13 M8.5 5.5 L15 13 M11 1 L12.5 3" fill="none" stroke="#8d8f9c" stroke-width="1.3"/>
<path transform="translate(2603.7,1567.3)" d="M3 0.5 L4 2 M0.5 4.5 H6 L1 11 M3.5 7 V15.5 M4 8.5 L6.5 10.5 M8 6 H15 M11.5 1 V15 M7.5 15 H15.5" fill="none" stroke="#8d8f9c" stroke-width="1.3"/>
<path transform="translate(2621.9,1567.3)" d="M15.5 1 H1 V15.3 H15.5 M4 4 L13 12.5 M13 4 L4 12.5" fill="none" stroke="#8d8f9c" stroke-width="1.3"/>
</svg>
</body></html>
